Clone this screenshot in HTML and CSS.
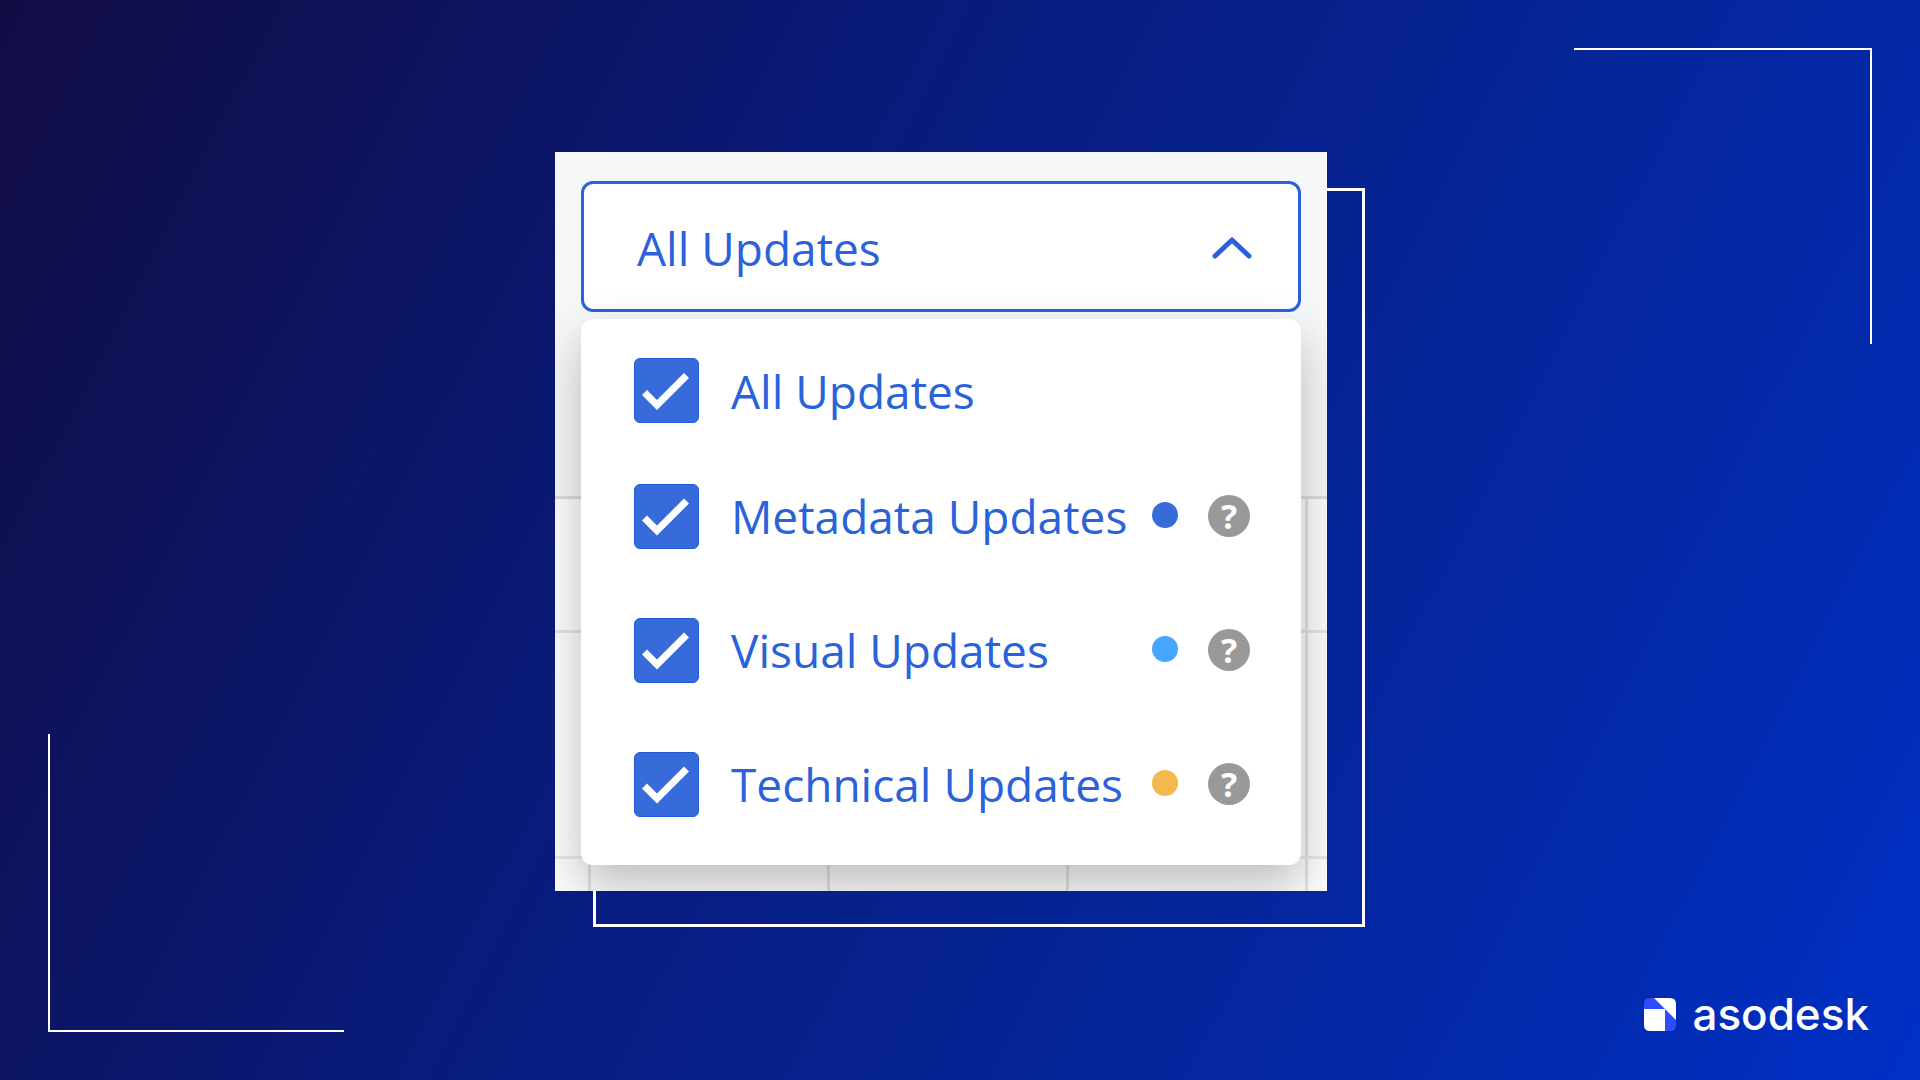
FILE: index.html
```html
<!doctype html>
<html lang="en">
<head>
<meta charset="utf-8">
<meta name="viewport" content="width=device-width, initial-scale=1">
<title>Asodesk - All Updates</title>
<link rel="stylesheet" href="styles.css">
</head>

<body>
<div class="page">
	<div class="corner corner-top"></div>
	<div class="corner corner-bottom"></div>

	<main class="stage">
		<div class="card">
			<button class="select" type="button" aria-expanded="true" aria-controls="updates">
				<span>All Updates</span>
				<svg class="chevron" viewBox="0 0 40 22" aria-hidden="true"><path d="M3 19 L20 3 L37 19"/></svg>
			</button>
			<ul class="menu" id="updates">
				<li class="row row-all">
					<input class="check" type="checkbox" id="all" checked>
					<label class="name" for="all">All Updates</label>
				</li>
				<li class="row">
					<input class="check" type="checkbox" id="metadata" checked>
					<label class="name" for="metadata">Metadata Updates</label>
					<span class="dot dot-metadata"></span>
					<button class="help" type="button">?</button>
				</li>
				<li class="row">
					<input class="check" type="checkbox" id="visual" checked>
					<label class="name" for="visual">Visual Updates</label>
					<span class="dot dot-visual"></span>
					<button class="help" type="button">?</button>
				</li>
				<li class="row">
					<input class="check" type="checkbox" id="technical" checked>
					<label class="name" for="technical">Technical Updates</label>
					<span class="dot dot-technical"></span>
					<button class="help" type="button">?</button>
				</li>
			</ul>
		</div>
	</main>

	<footer class="brand">
		<svg class="logo" viewBox="0 0 32 33" aria-hidden="true">
			<path fill="#2f4dff" d="M6 0H12L32 21V27Q32 33 26 33H20L0 13V6Q0 0 6 0Z"/>
			<path fill="#fff" d="M10 0H26Q32 0 32 6V22Z"/>
			<path fill="#fff" d="M0 11H21V33H6Q0 33 0 27Z"/>
		</svg>
		<span>asodesk</span>
	</footer>
</div>
</body>
</html>
```

FILE: styles.css
```css
*{ margin: 0; padding: 0; box-sizing: border-box;}
body{ font-family: "Open Sans", "Noto Sans", sans-serif; font-size: 46px; line-height: 62px; color: #2a62da;}
ul{ list-style: none;}
button{ font: inherit; color: inherit; border: 0; cursor: pointer;}

.page{ position: relative; min-height: 100vh; display: grid; grid-template-rows: 1fr auto 1fr; padding-bottom: 1px; background: linear-gradient(117deg, #120d45 0%, #0e125a 16%, #081c80 42%, #052496 64%, #022aae 84%, #0030c6 100%);}

/* corner lines */
.corner{ position: absolute;}
.corner-top{ top: 48px; right: 48px; width: 298px; height: 296px; border-top: 2px solid #fff; border-right: 2px solid #fff;}
.corner-bottom{ bottom: 48px; left: 48px; width: 296px; height: 298px; border-bottom: 2px solid #fff; border-left: 2px solid #fff;}

.stage{ grid-row: 2; position: relative; width: 100%; max-width: 810px; margin: 0 auto; padding: 0 38px 36px 0;}
.stage::before{ content: ""; position: absolute; top: 36px; right: 0; bottom: 0; left: 38px; border: 3px solid #fff;}

/* the table behind the menu: header, then cell lines */
.card{
	position: relative; display: flex; flex-direction: column; gap: 7px; padding: 29px 26px 26px; overflow: hidden;
	background:
		linear-gradient(#f5f7f9, #f5f7f9) 0 0 / 100% 344px no-repeat,
		linear-gradient(#dcdcdc, #dcdcdc) 0 344px / 100% 3px no-repeat,
		linear-gradient(#e4e4e4, #e4e4e4) 0 478px / 100% 3px no-repeat,
		linear-gradient(#e8e8e8, #e8e8e8) 0 704px / 100% 3px no-repeat,
		repeating-linear-gradient(90deg, transparent 0 33px, #e2e2e2 33px 36px, transparent 36px 239px),
		#fcfcfc;
}

.select{ display: flex; align-items: center; justify-content: space-between; height: 131px; padding: 2px 46px 0 53px; border: 3px solid #2a62da; border-radius: 12px; background: #fff;}
.chevron{ width: 40px; height: 22px; fill: none; stroke: #2a62da; stroke-width: 5; stroke-linecap: round; stroke-linejoin: round;}

.menu{ display: flex; flex-direction: column; gap: 52px; padding: 39px 51px 40px 53px; border-radius: 12px; background: #fff; box-shadow: 0 20px 48px rgba(0,0,0,.25);}
.row{ display: flex; align-items: center; min-height: 82px;}
.row-all{ min-height: 65px;}
.name{ flex: 1; margin-left: 32px; white-space: nowrap;}

.check{ appearance: none; flex: none; width: 65px; height: 65px; border: 1px solid #1f5ad8; border-radius: 6px; background: #366bd9; cursor: pointer;}
.check:checked::before{ content: ""; display: block; width: 63px; height: 63px; background: #fff; clip-path: polygon(7px 36px, 12px 31px, 22px 41px, 49px 14px, 54px 19px, 22px 51px);}

.dot{ width: 26px; height: 26px; margin-bottom: 2px; border-radius: 50%;}
.dot-metadata{ background: #366bd9;}
.dot-visual{ background: #47a6ff;}
.dot-technical{ background: #f3b94f;}
.help{ width: 42px; height: 42px; margin-left: 30px; border-radius: 50%; background: #999; color: #fff; font-size: 34px; font-weight: 700; line-height: 42px;}

.brand{ grid-row: 3; align-self: end; justify-self: end; display: flex; align-items: center; gap: 16px; padding: 0 51px 34px 0; font-family: Inter, "Liberation Sans", sans-serif; font-size: 44px; font-weight: 500; color: #fff;}
.logo{ width: 32px; height: 33px;}
```
